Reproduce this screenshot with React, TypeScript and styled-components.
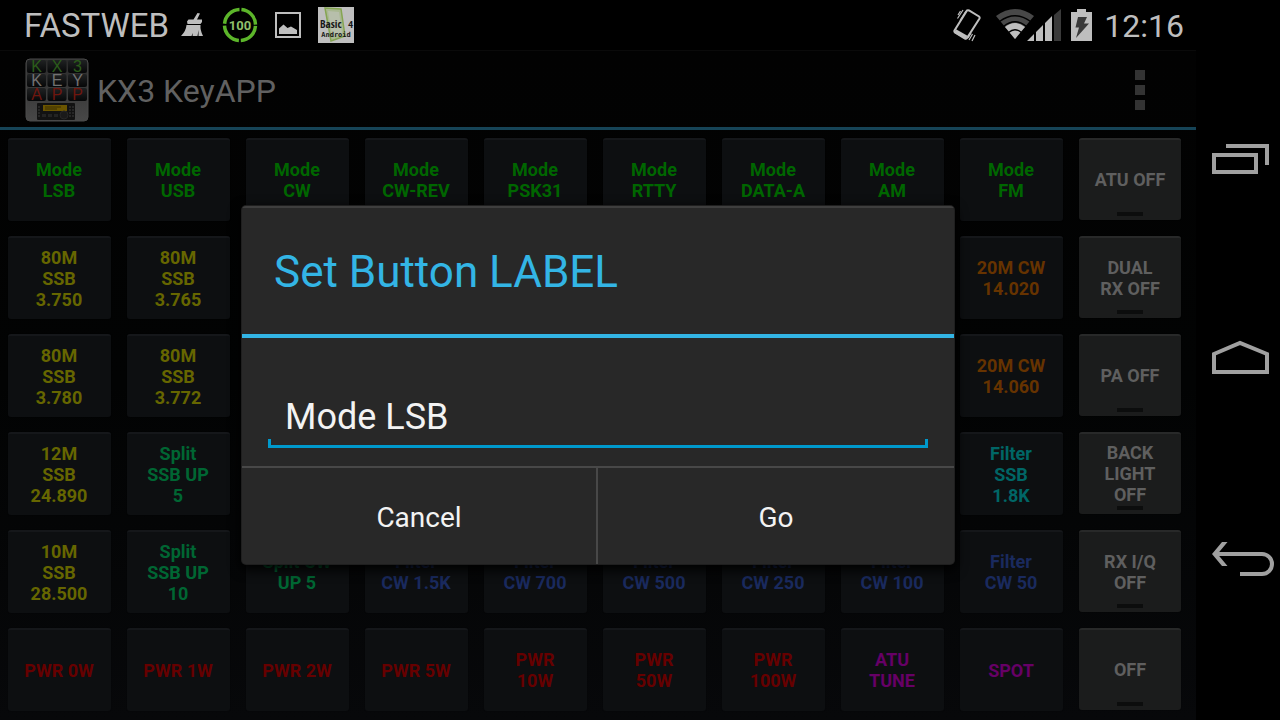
import React from 'react';
import styled, { createGlobalStyle, css } from 'styled-components';

const Global = createGlobalStyle`
  *, *::before, *::after { box-sizing: border-box; }
  body { margin: 0; background: #000; font-family: Roboto, "Liberation Sans", sans-serif; }
  button, input { font-family: inherit; }
  h1, h2 { margin: 0; font-weight: 400; }
`;

const Screen = styled.div`
  display: flex;
  min-height: 100vh;
`;

const AppArea = styled.div`
  position: relative;
  flex: 1;
  min-width: 0;
  display: flex;
  flex-direction: column;
`;

const StatusBar = styled.header`
  display: flex;
  align-items: center;
  justify-content: space-between;
  height: 50px;
  padding: 0 12px 0 24px;
  color: #bebebe;
  line-height: 48px;
  white-space: nowrap;
`;

const StatusGroup = styled.div<{ $gap: number }>`
  display: flex;
  align-items: center;
  gap: ${(p) => p.$gap}px;

  svg { display: block; }
`;

const Carrier = styled.span`
  padding-top: 2px;
  font-size: 33px;
`;

const Clock = styled.time`
  margin-left: 1px;
  padding-top: 2px;
  font-size: 32px;
`;

const Window = styled.main`
  position: relative;
  flex: 1;
  display: flex;
  flex-direction: column;
  background: linear-gradient(#020202, #020303 50%, #07080a);
`;

const ActionBar = styled.div`
  display: flex;
  align-items: center;
  height: 80px;
  padding: 2px 36px 0 25px;
  border-top: 1px solid #0a0a0a;
  border-bottom: 3px solid #164457;
  gap: 8px;

  svg { display: block; }
`;

const AppTitle = styled.h1`
  flex: 1;
  padding-top: 2px;
  color: #616161;
  font-size: 32px;
  line-height: 40px;
`;

const OverflowButton = styled.button`
  display: flex;
  flex-direction: column;
  align-items: center;
  gap: 5px;
  width: 40px;
  padding: 0;
  border: 0;
  background: none;
`;

const Dot = styled.span`
  width: 10px;
  height: 10px;
  background: #333;
`;

const KeyGrid = styled.div`
  flex: 1;
  display: grid;
  grid-template-columns: repeat(10, minmax(0, 1fr));
  grid-template-rows: repeat(6, minmax(83px, 1fr));
  gap: 15px 16px;
  padding: 8px 14px 9px 8px;
`;

const Key = styled.button<{ $color: string; $toggle?: boolean }>`
  position: relative;
  padding: 0 1px 1px 0;
  border: 0;
  border-top: 2px solid #15171a;
  border-radius: 3px;
  background: #0d0f11;
  box-shadow: 0 0 1px #070809;
  color: ${(p) => p.$color};
  font-size: 18px;
  font-weight: 700;
  line-height: 21px;
  text-align: center;
  white-space: pre-line;

  ${(p) =>
    p.$toggle &&
    css`
      margin: 0 1px 1px 0;
      padding-right: 0;
      border-top-color: #282929;
      background: #1b1c1c;

      &::after {
        content: '';
        position: absolute;
        left: calc(50% - 13px);
        bottom: 4px;
        width: 26px;
        height: 4px;
        background: #0c0d0d;
      }
    `}
`;

const Overlay = styled.div`
  position: absolute;
  inset: 0;
  display: flex;
  align-items: center;
  justify-content: center;
`;

const Dialog = styled.form`
  width: 712px;
  max-width: 100%;
  border-radius: 4px;
  background: #282828;
  box-shadow: 0 0 0 1px #1f1f1f, 0 4px 12px 2px #000;
  overflow: hidden;
`;

const DialogTitle = styled.h2`
  padding: 35px 32px 33px;
  border-top: 2px solid #3e3e3e;
  border-bottom: 4px solid #33b5e5;
  color: #33b5e5;
  font-size: 44px;
  line-height: 58px;
`;

const DialogBody = styled.div`
  padding: 48px 26px 18px;
`;

const LabelInput = styled.input`
  display: block;
  width: 100%;
  height: 62px;
  padding: 0 17px;
  border: 0;
  border-radius: 0;
  outline: 0;
  color: #f3f3f3;
  font-size: 36px;
  background:
    linear-gradient(#0099cc, #0099cc) left bottom / 3px 9px no-repeat,
    linear-gradient(#0099cc, #0099cc) right bottom / 3px 9px no-repeat,
    linear-gradient(#0099cc, #0099cc) left bottom / 100% 3px no-repeat;
`;

const DialogActions = styled.div`
  display: grid;
  grid-template-columns: 1fr 1fr;
  border-top: 2px solid #484848;
`;

const DialogButton = styled.button`
  height: 96px;
  padding: 2px 0 0;
  border: 0;
  background: none;
  color: #f3f3f3;
  font-size: 28px;

  &:first-child { border-right: 2px solid #484848; }
`;

const NavBar = styled.nav`
  display: flex;
  flex-direction: column;
  justify-content: center;
  width: 84px;
`;

const NavButton = styled.button`
  height: 200px;
  padding: 0;
  border: 0;
  background: none;

  svg { display: block; }
`;

const GREEN = '#006600';
const YELLOW = '#666600';
const ORANGE = '#663300';
const MINT = '#006633';
const TEAL = '#006666';
const BLUE = '#1a2a5e';
const RED = '#660000';
const PURPLE = '#660066';
const GREY = '#5f5f5f';

type KeyDef = { label: string; color: string; col: number; row: number };

const line = (row: number, color: string, start: number, labels: string[]): KeyDef[] =>
  labels.map((label, i) => ({ label, color, row, col: start + i }));

const keys: KeyDef[] = [
  ...line(1, GREEN, 1, ['Mode\nLSB', 'Mode\nUSB', 'Mode\nCW', 'Mode\nCW-REV', 'Mode\nPSK31', 'Mode\nRTTY', 'Mode\nDATA-A', 'Mode\nAM', 'Mode\nFM']),
  ...line(1, GREY, 10, ['ATU OFF']),
  ...line(2, YELLOW, 1, ['80M\nSSB\n3.750', '80M\nSSB\n3.765']),
  ...line(2, ORANGE, 9, ['20M CW\n14.020']),
  ...line(2, GREY, 10, ['DUAL\nRX OFF']),
  ...line(3, YELLOW, 1, ['80M\nSSB\n3.780', '80M\nSSB\n3.772']),
  ...line(3, ORANGE, 9, ['20M CW\n14.060']),
  ...line(3, GREY, 10, ['PA OFF']),
  ...line(4, YELLOW, 1, ['12M\nSSB\n24.890']),
  ...line(4, MINT, 2, ['Split\nSSB UP\n5']),
  ...line(4, TEAL, 9, ['Filter\nSSB\n1.8K']),
  ...line(4, GREY, 10, ['BACK\nLIGHT\nOFF']),
  ...line(5, YELLOW, 1, ['10M\nSSB\n28.500']),
  ...line(5, MINT, 2, ['Split\nSSB UP\n10', 'Split CW\nUP 5']),
  ...line(5, BLUE, 4, ['Filter\nCW 1.5K', 'Filter\nCW 700', 'Filter\nCW 500', 'Filter\nCW 250', 'Filter\nCW 100', 'Filter\nCW 50']),
  ...line(5, GREY, 10, ['RX I/Q\nOFF']),
  ...line(6, RED, 1, ['PWR 0W', 'PWR 1W', 'PWR 2W', 'PWR 5W', 'PWR\n10W', 'PWR\n50W', 'PWR\n100W']),
  ...line(6, PURPLE, 8, ['ATU\nTUNE', 'SPOT']),
  ...line(6, GREY, 10, ['OFF']),
];

const PlacedKey = styled(Key)<{ $col: number; $row: number }>`
  grid-column: ${(p) => p.$col};
  grid-row: ${(p) => p.$row};
`;

const BroomIcon = () => (
  <svg width="24" height="26" viewBox="0 0 24 26" fill="#bebebe">
    <path d="M16.5 1 19 1.5 16 7.500H21V10L19.500 12H6.500L6 9.500 7.500 7.500H12.500Z" />
    <path d="M5.500 13H19.500Q19 18 22 24H17.500L17.500 18 16.500 24H11.500L12 21 10.500 24H0Q5 19 5.500 13Z" />
  </svg>
);

const BatteryRing = () => (
  <svg width="36" height="36" viewBox="0 0 36 36">
    <circle cx="18" cy="18" r="15.500" fill="none" stroke="#5cb52a" strokeWidth="3.500" strokeDasharray="22.350 2" strokeDashoffset="-1" />
    <text x="18" y="23" textAnchor="middle" fontSize="13" fontWeight="700" fill="#8fbf6c">100</text>
  </svg>
);

const PictureIcon = () => (
  <svg width="26" height="26" viewBox="0 0 26 26">
    <rect x="1" y="1" width="24" height="24" fill="none" stroke="#bebebe" strokeWidth="2" />
    <path d="M4 22V16.500L8.500 12.500 12.500 16 16 14.500 22 18V22Z" fill="#bebebe" />
  </svg>
);

const BasicIcon = () => (
  <svg width="36" height="36" viewBox="0 0 36 36">
    <rect width="36" height="36" fill="#bfbfbf" />
    <path d="M7 1 23 2 27 29 13 34Z" fill="#a9b891" stroke="#85a552" strokeWidth="1.500" />
    <path d="M10 4 21 5 24 26 14 29Z" fill="#b7bfab" />
    <g fontWeight="700" fill="#161616">
      <text x="2" y="21" fontSize="13" fontFamily="Open Sans Condensed, DejaVu Sans Condensed, sans-serif">
        <tspan fontFamily="Liberation Sans Narrow, Open Sans Condensed, Roboto, sans-serif" fontSize="11">Basic</tspan>
      </text>
      <text x="30" y="21" fontSize="9" fontFamily="Roboto, sans-serif">
        4
      </text>
      <text x="18" y="30" textAnchor="middle" fontSize="7" fontFamily="DejaVu Sans Mono, monospace">
        Android
      </text>
    </g>
  </svg>
);

const VibrateIcon = () => (
  <svg width="32" height="36" viewBox="0 0 32 36" fill="none" stroke="#bebebe">
    <path d="M14 3.500Q15 3 16 3.500L26 9.500Q27 10.500 26.500 11.500L14 31Q13 32 12 31.500L2 25.500Q1 24.500 1.500 23.500Z" strokeWidth="2" />
    <path d="M2 24 13.500 30.500" strokeWidth="4" />
    <path d="M4.500 11.500 10 3M7 13.500 13 4M5 8 7.500 4M16 33 19.500 27M19 34 22 28M15 31 18 26" strokeWidth="1.200" />
  </svg>
);

const SignalIcon = () => (
  <svg width="66" height="32" viewBox="0 0 66 32">
    <path d="M1 7Q20-7 39 7L20 30Z" fill="#484848" />
    <path d="M10 18Q20 10 30 18L20 30Z" fill="#bebebe" />
    <path d="M4.500 12.500Q20 1 35.500 12.500M8.500 17.500Q20 8 31.500 17.500M13.500 23.500Q20 18 26.500 23.500" fill="none" stroke="#000" strokeWidth="1.500" />
    <path d="M32 32 39 25V32ZM41 23 48 16V32H41ZM50 14 57 7V32H50Z" fill="#bebebe" />
    <path d="M59 6 66 0V32H59Z" fill="#3a3a3a" />
  </svg>
);

const BatteryIcon = () => (
  <svg width="22" height="32" viewBox="0 0 22 32">
    <path d="M6 0H15V3H21V32H0V3H6Z" fill="#bebebe" />
    <path d="M7 8H16L13 14.500H18L5 29 8 18.500H4.500Z" fill="#3a3a3a" />
  </svg>
);

const LauncherIcon = () => (
  <svg width="64" height="64" viewBox="0 0 64 64">
    <defs>
      <linearGradient id="plate" x1="0" y1="0" x2="0" y2="1">
        <stop offset="0" stopColor="#2a2a2a" />
        <stop offset="1" stopColor="#484848" />
      </linearGradient>
      <linearGradient id="cap" x1="0" y1="0" x2="0" y2="1">
        <stop offset="0" stopColor="#202223" />
        <stop offset="1" stopColor="#060708" />
      </linearGradient>
    </defs>
    <rect x="1" y="1" width="62" height="62" rx="4" fill="url(#plate)" stroke="#4a4a4a" />
    {['KX3', 'KEY', 'APP'].map((word, r) =>
      word.split('').map((ch, c) => (
        <g key={`${r}${c}`}>
          <rect x={2 + c * 20.5} y={2 + r * 14} width="19" height="13" rx="2" fill="url(#cap)" />
          <text x={11.5 + c * 20.5} y={14 + r * 14} textAnchor="middle" fontSize="16" fontFamily="Liberation Sans, sans-serif" fill={['#2b5c1a', '#717171', '#6e160e'][r]}>
            {ch}
          </text>
        </g>
      )),
    )}
    <rect x="12" y="45" width="38" height="17" rx="1" fill="#121212" />
    <rect x="18" y="47" width="24" height="6" fill="#6b5500" />
    <path d="M20 49H36M20 51H32" stroke="#3a2e00" />
    <path d="M17 57.500H35" stroke="#232323" strokeWidth="3" strokeDasharray="4 2" />
    <circle cx="39" cy="57" r="4" fill="#1a1a1a" stroke="#262626" />
    <path d="M45 48V60M48 48V60M14 48V60" stroke="#262626" strokeWidth="2" strokeDasharray="2 1" />
  </svg>
);

const NavIcon = ({ d, head }: { d: string; head?: string }) => (
  <svg width="84" height="200" viewBox="0 0 84 200">
    <path d={d} fill="none" stroke="#a0a0a0" strokeWidth="4" />
    {head && <path d={head} fill="#a0a0a0" />}
  </svg>
);

export default function App() {
  return (
    <Screen>
      <Global />
      <AppArea>
        <StatusBar>
          <StatusGroup $gap={12}>
            <Carrier>FASTWEB</Carrier>
            <StatusGroup $gap={17}>
              <BroomIcon />
              <BatteryRing />
              <PictureIcon />
              <BasicIcon />
            </StatusGroup>
          </StatusGroup>
          <StatusGroup $gap={10}>
            <VibrateIcon />
            <SignalIcon />
            <BatteryIcon />
            <Clock>12:16</Clock>
          </StatusGroup>
        </StatusBar>
        <Window>
          <ActionBar>
            <LauncherIcon />
            <AppTitle>KX3 KeyAPP</AppTitle>
            <OverflowButton type="button" aria-label="More options">
              <Dot />
              <Dot />
              <Dot />
            </OverflowButton>
          </ActionBar>
          <KeyGrid>
            {keys.map((k) => (
              <PlacedKey key={`${k.row}-${k.col}`} type="button" $color={k.color} $toggle={k.col === 10} $col={k.col} $row={k.row}>
                {k.label}
              </PlacedKey>
            ))}
          </KeyGrid>
          <Overlay>
            <Dialog role="dialog" aria-labelledby="dialog-title" onSubmit={(e) => e.preventDefault()}>
              <DialogTitle id="dialog-title">Set Button LABEL</DialogTitle>
              <DialogBody>
                <LabelInput aria-labelledby="dialog-title" defaultValue="Mode LSB" />
              </DialogBody>
              <DialogActions>
                <DialogButton type="button">Cancel</DialogButton>
                <DialogButton type="submit">Go</DialogButton>
              </DialogActions>
            </Dialog>
          </Overlay>
        </Window>
      </AppArea>
      <NavBar>
        <NavButton type="button" aria-label="Recent apps">
          <NavIcon d="M18 95H60V112H18ZM30 86H71V105" />
        </NavButton>
        <NavButton type="button" aria-label="Home">
          <NavIcon d="M18 112V94L44 83 71 94V112Z" />
        </NavButton>
        <NavButton type="button" aria-label="Back">
          <NavIcon d="M20 94H66A10 10 0 0 1 66 114H44" head="M16 94 26 82H31.5L21.5 94 31.5 106H26Z" />
        </NavButton>
      </NavBar>
    </Screen>
  );
}
